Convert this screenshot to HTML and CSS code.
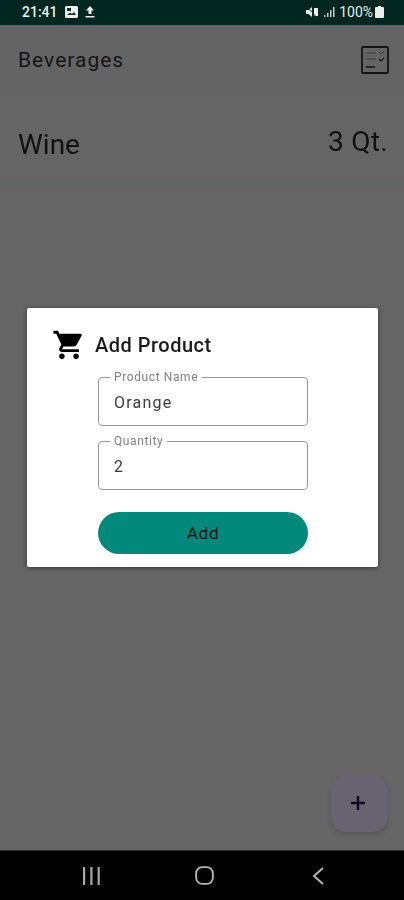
FILE: index.html
```html
<!DOCTYPE html>
<html lang="en">
<head>
  <meta charset="UTF-8" />
  <meta name="viewport" content="width=device-width, initial-scale=1.0" />
  <title>Beverages</title>
  <link rel="stylesheet" href="styles.css">
</head>
<body>
  <div class="phone">
    <!-- Status bar -->
    <div class="status">
      <div class="status-left">
        <span class="time">21:41</span>
        <svg class="status-img" viewBox="0 0 13 12"><path fill="#e8eeec" d="M1.5 0h10A1.5 1.5 0 0 1 13 1.5v9a1.500 1.500 0 0 1-1.500 1.500h-10A1.500 1.500 0 0 1 0 10.500v-9A1.500 1.500 0 0 1 1.500 0z"/><path fill="#12302a" d="M2 2h4v3H2zM2 9l3-2.500 2 1.500 2-2 2 3z"/></svg>
        <svg class="status-up" viewBox="0 0 10 12"><path fill="#e8eeec" d="M5 0l4 4.500H6.500V8h-3V4.500H1zM0.500 10h9v1.600h-9z"/></svg>
      </div>
      <div class="status-right">
        <svg class="status-mute" viewBox="0 0 13 12"><path fill="#e8eeec" d="M0 4h2.500L6 1v10L2.500 8H0zM8 2h4v8H8z"/><path stroke="#12302a" stroke-width="1" d="M1 0l10 12"/></svg>
        <svg class="status-signal" viewBox="0 0 11 10"><path fill="#c4ccca" d="M0 8h1.500v2H0zM3 6h1.500v4H3zM6 3h1.500v7H6zM9 0h1.500v10H9z"/></svg>
        <span class="percent">100%</span>
        <svg class="status-batt" viewBox="0 0 9 12"><path fill="#e8eeec" d="M3 0h3v1h2a1 1 0 0 1 1 1v9a1 1 0 0 1-1 1H1a1 1 0 0 1-1-1V2a1 1 0 0 1 1-1h2z"/></svg>
      </div>
    </div>

    <div class="main">
      <div class="toolbar">
        <span class="toolbar-title">Beverages</span>
        <svg class="list-icon" viewBox="0 0 28 28" fill="none">
          <rect x="1" y="1" width="26" height="26" rx="1" stroke="#141414" stroke-width="1.800"/>
          <path stroke="#3c3c3c" stroke-width="1" d="M5 7h10M5 13h10"/>
          <path stroke="#141414" stroke-width="1.600" d="M5 21h9"/>
          <path stroke="#3c3c3c" stroke-width="1" d="M18 6l2 2 3-3"/>
          <path stroke="#1c1c1c" stroke-width="1.300" d="M18 13l2 2 3-3"/>
        </svg>
      </div>

      <div class="item">
        <span class="item-name">Wine</span>
        <span class="item-qty">3 Qt.</span>
      </div>

      <button class="fab">
        <svg viewBox="0 0 14 14"><path fill="#120a24" d="M5.800 0h2.400v5.800H14v2.400H8.200V14H5.800V8.200H0V5.800h5.800z"/></svg>
      </button>

      <!-- Add product dialog -->
      <div class="overlay">
        <div class="dialog">
          <div class="dialog-head">
            <svg class="cart" viewBox="0 0 24 24"><path d="M7 18c-1.100 0-1.990.9-1.990 2S5.900 22 7 22s2-.9 2-2-.9-2-2-2zM1 2v2h2l3.600 7.590-1.350 2.450c-.16.28-.25.61-.25.96 0 1.100.9 2 2 2h12v-2H7.420c-.14 0-.25-.11-.25-.25l.03-.12.9-1.630h7.450c.75 0 1.410-.41 1.750-1.030l3.580-6.490c.08-.14.12-.31.12-.48 0-.55-.45-1-1-1H5.210l-.94-2H1zm16 16c-1.100 0-1.990.9-1.990 2s.89 2 1.990 2 2-.9 2-2-.9-2-2-2z"/></svg>
            <span class="dialog-title">Add Product</span>
          </div>
          <div class="form">
            <fieldset class="field">
              <legend class="field-label">Product Name</legend>
              <input class="field-input" type="text" value="Orange">
            </fieldset>
            <fieldset class="field">
              <legend class="field-label">Quantity</legend>
              <input class="field-input" type="text" value="2">
            </fieldset>
            <button class="add-button">Add</button>
          </div>
        </div>
      </div>
    </div>

    <!-- Navigation bar -->
    <div class="nav">
      <svg class="nav-recent" viewBox="0 0 17 18"><path fill="#a9a9a9" d="M0 0h2.200v18H0zM7.300 0h2.200v18H7.300zM14.600 0h2.200v18h-2.200z"/></svg>
      <svg class="nav-home" viewBox="0 0 20 20" fill="none"><rect x="1.200" y="1.200" width="17.600" height="17.600" rx="6.500" stroke="#b4b4b4" stroke-width="2"/></svg>
      <svg class="nav-back" viewBox="0 0 12 18" fill="none"><path stroke="#b4b4b4" stroke-width="2" d="M11 1L2 9l9 8"/></svg>
    </div>
  </div>
</body>
</html>
```

FILE: styles.css
```css
* {
  box-sizing: border-box;
}

body {
  margin: 0;
  background: #666566;
  font-family: 'Roboto', sans-serif;
}

.phone {
  width: 404px;
  height: 900px;
  display: flex;
  flex-direction: column;
  overflow: hidden;
  filter: blur(0.4px);
}

/* Status bar */
.status {
  height: 25px;
  background: #01261f;
  color: #e8eeec;
  display: flex;
  justify-content: space-between;
  align-items: center;
  padding: 0 20px 1px 22px;
  font-size: 14px;
  font-weight: 500;
}

.status-left, .status-right {
  display: flex;
  align-items: center;
}

.status-img {
  width: 13px;
  height: 12px;
  margin-left: 7px;
}

.status-up {
  width: 10px;
  height: 12px;
  margin-left: 7px;
}

.status-mute {
  width: 13px;
  height: 12px;
}

.status-signal {
  width: 11px;
  height: 10px;
  margin-left: 5px;
}

.percent {
  margin-left: 4px;
  font-weight: 400;
}

.status-batt {
  width: 9px;
  height: 12px;
  margin-left: 2px;
}

.main {
  flex: 1;
  position: relative;
  display: flex;
  flex-direction: column;
}

.toolbar {
  height: 72px;
  background: #646464;
  display: flex;
  justify-content: space-between;
  align-items: center;
  padding: 0 15px 2px 18px;
}

.toolbar-title {
  font-size: 21px;
  letter-spacing: 1px;
  color: #141414;
}

.list-icon {
  width: 28px;
  height: 28px;
}

.item {
  height: 88px;
  display: flex;
  justify-content: space-between;
  align-items: center;
  padding: 8px 16px 0 18px;
  border-bottom: 2px solid #4f6b62;
  color: #111;
  font-size: 28px;
}

.item-qty {
  margin-top: -6px;
  letter-spacing: 0.3px;
}

.fab {
  position: absolute;
  right: 16px;
  bottom: 18px;
  width: 57px;
  height: 57px;
  padding: 0 3px 2px 0;
  border: none;
  border-radius: 16px;
  background: #686370;
  box-shadow: 0 3px 5px rgba(0, 0, 0, 0.14);
  display: flex;
  justify-content: center;
  align-items: center;
}

.fab svg {
  width: 14px;
  height: 14px;
}

.overlay {
  position: absolute;
  top: 0;
  left: 0;
  right: 0;
  bottom: 0;
  display: flex;
  justify-content: center;
  align-items: center;
  padding-left: 1px;
}

.dialog {
  width: 351px;
  height: 259px;
  background: white;
  border-radius: 2px;
  box-shadow: 0 1px 4px rgba(0, 0, 0, 0.5);
  padding: 20px 0 0 25px;
}

.dialog-head {
  display: flex;
  align-items: center;
  gap: 9px;
}

.cart {
  width: 34px;
  height: 34px;
}

.dialog-title {
  font-size: 20px;
  font-weight: 500;
  letter-spacing: 0.5px;
  color: #1a1a1a;
}

.form {
  width: 210px;
  margin: 8px 0 0 46px;
  display: flex;
  flex-direction: column;
  gap: 8px;
}

.field {
  margin: 0;
  height: 56px;
  padding: 0 11px;
  border: 1px solid #989898;
  border-radius: 4px;
  min-width: 0;
}

.field-label {
  padding: 0 4px;
  font-size: 12px;
  line-height: 14px;
  color: #808080;
  letter-spacing: 0.6px;
}

.field-input {
  display: block;
  width: 100%;
  border: none;
  outline: none;
  padding: 7px 4px 0;
  background: none;
  font-family: inherit;
  font-size: 16px;
  line-height: 24px;
  letter-spacing: 1.2px;
  color: #3a3a3a;
}

.add-button {
  margin-top: 14px;
  height: 42px;
  border: none;
  border-radius: 21px;
  background: #01897b;
  color: #06120f;
  font-family: inherit;
  font-size: 17px;
  letter-spacing: 0.8px;
}

/* Navigation bar */
.nav {
  height: 50px;
  background: #000;
  border-top: 1px solid #2f2f2f;
  position: relative;
  display: grid;
  grid-template-columns: 83px 17px 95px 18px 99px 12px;
  align-items: center;
}

.nav-recent {
  grid-column: 2;
  width: 17px;
  height: 18px;
}

.nav-home {
  grid-column: 4;
  width: 19px;
  height: 19px;
}

.nav-back {
  grid-column: 6;
  width: 12px;
  height: 18px;
}
```
